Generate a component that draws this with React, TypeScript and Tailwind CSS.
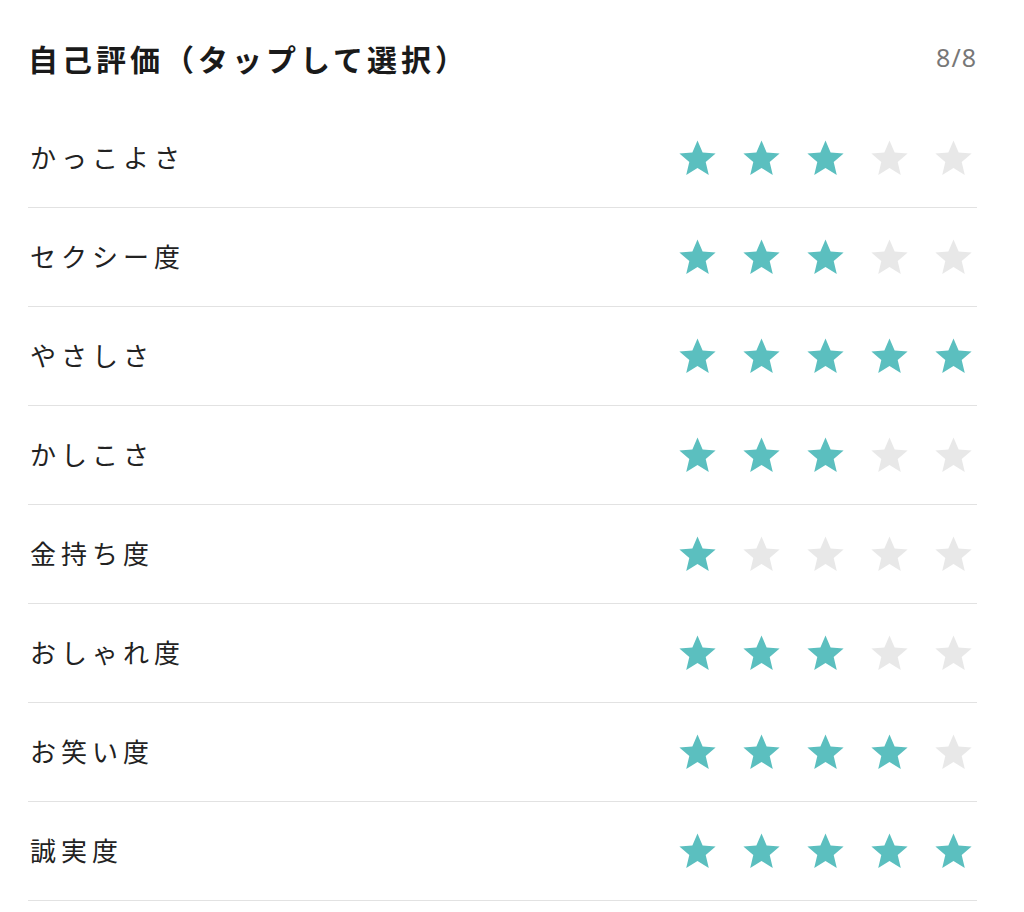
const ITEMS: { label: string; value: number }[] = [
  { label: "かっこよさ", value: 3 },
  { label: "セクシー度", value: 3 },
  { label: "やさしさ", value: 5 },
  { label: "かしこさ", value: 3 },
  { label: "金持ち度", value: 1 },
  { label: "おしゃれ度", value: 3 },
  { label: "お笑い度", value: 4 },
  { label: "誠実度", value: 5 },
];

function Star({ filled }: { filled: boolean }) {
  return (
    <svg
      viewBox="0 0 24 24"
      className={`w-[41px] h-[41px] ${filled ? "text-[#5bbfbf]" : "text-[#e8e8e8]"}`}
    >
      <polygon
        fill="currentColor"
        points="12,1.4 15,8.5 22.6,9.1 16.8,14.1 18.6,21.6 12,17.6 5.4,21.6 7.2,14.1 1.4,9.1 9,8.5"
      />
    </svg>
  );
}

export default function App() {
  return (
    <div
      className="bg-white w-[1024px] h-[912px] pl-[28px] pr-[47px] text-[#222]"
      style={{ fontFamily: '"Noto Sans CJK JP", "Noto Sans", sans-serif' }}
    >
      <div className="h-[109px] pt-[7px] flex items-center justify-between">
        <h2 className="text-[30px] font-bold tracking-[4px] text-[#1a1a1a]">
          自己評価（タップして選択）
        </h2>
        <span
          className="text-[25px] tracking-[1px] text-[#777]"
          style={{ fontFamily: '"Noto Sans", sans-serif' }}
        >
          8/8
        </span>
      </div>

      <div>
        {ITEMS.map((item) => (
          <div
            key={item.label}
            className="h-[99px] flex items-center justify-between border-b border-[#e2e2e2]"
          >
            <span className="text-[26px] tracking-[5px] pl-[2px] pb-[4px]">{item.label}</span>
            <div className="flex gap-[23px] pr-[3px]">
              {[1, 2, 3, 4, 5].map((n) => (
                <Star key={n} filled={n <= item.value} />
              ))}
            </div>
          </div>
        ))}
      </div>
    </div>
  );
}
